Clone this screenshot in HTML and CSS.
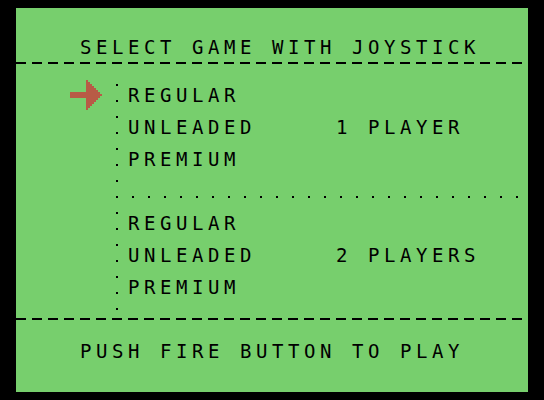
FILE: index.html
```html
<!DOCTYPE html>
<html lang="en">
<head>
    <meta charset="UTF-8">
    <title>Select Game</title>
    <link rel="stylesheet" href="styles.css">
</head>
<body>
<div class="screen">
    <p class="line title">SELECT GAME WITH JOYSTICK</p>
    <div class="rule"></div>
    <div class="menu">
        <div class="line opt">
            <svg class="cursor" width="32" height="32" viewBox="0 0 32 32" shape-rendering="crispEdges">
                <rect x="0" y="12" width="18" height="6"/>
                <rect x="16" y="0" width="2" height="30"/>
                <rect x="18" y="2" width="2" height="26"/>
                <rect x="20" y="4" width="2" height="22"/>
                <rect x="22" y="6" width="2" height="18"/>
                <rect x="24" y="8" width="2" height="14"/>
                <rect x="26" y="10" width="2" height="10"/>
                <rect x="28" y="12" width="2" height="6"/>
                <rect x="30" y="14" width="2" height="2"/>
            </svg>
            <span class="name">REGULAR</span>
        </div>
        <div class="line opt"><span class="name">UNLEADED</span><span>1 PLAYER</span></div>
        <div class="line opt"><span class="name">PREMIUM</span></div>
        <div class="dots"></div>
        <div class="line opt"><span class="name">REGULAR</span></div>
        <div class="line opt"><span class="name">UNLEADED</span><span>2 PLAYERS</span></div>
        <div class="line opt"><span class="name">PREMIUM</span></div>
    </div>
    <div class="rule"></div>
    <p class="line footer">PUSH FIRE BUTTON TO PLAY</p>
</div>
</body>
</html>
```

FILE: styles.css
```css
* {
    padding: 0;
    margin: 0;
}

body {
    background: #000;
}

/* 32 x 24 cells, 16px each */
.screen {
    width: 512px;
    height: 384px;
    margin: 8px 16px;
    padding-top: 32px;
    box-sizing: border-box;
    background: #77cf6d;
    color: #000;
    font-family: "DejaVu Sans Mono", monospace;
    font-size: 19px;
    letter-spacing: 4.56px;
}

.line {
    height: 16px;
    line-height: 15px;
    white-space: pre;
}

.title,
.footer {
    padding-left: 64px;
}

.footer {
    margin-top: 16px;
}

/* row of dashes, one per cell */
.rule {
    height: 16px;
    background-image: linear-gradient(to right, #000 10px, transparent 10px);
    background-size: 16px 2px;
    background-position: 0 6px;
    background-repeat: repeat-x;
}

/* dotted column down the left of the choices */
.menu {
    display: flex;
    flex-direction: column;
    gap: 16px;
    padding: 16px 0 16px 16px;
    margin-left: 96px;
    background-image: linear-gradient(to bottom, transparent 12px, #000 12px, #000 14px, transparent 14px);
    background-size: 2px 16px;
    background-position: 4px 0;
    background-repeat: repeat-y;
}

.opt {
    display: flex;
    position: relative;
}

.opt .name {
    width: 208px;
}

.dots {
    height: 16px;
    margin-left: -16px;
    background-image: linear-gradient(to right, transparent 4px, #000 4px, #000 6px, transparent 6px);
    background-size: 16px 2px;
    background-position: 0 12px;
    background-repeat: repeat-x;
}

.cursor {
    position: absolute;
    left: -58px;
    top: -8px;
    fill: #b85b46;
}
```
